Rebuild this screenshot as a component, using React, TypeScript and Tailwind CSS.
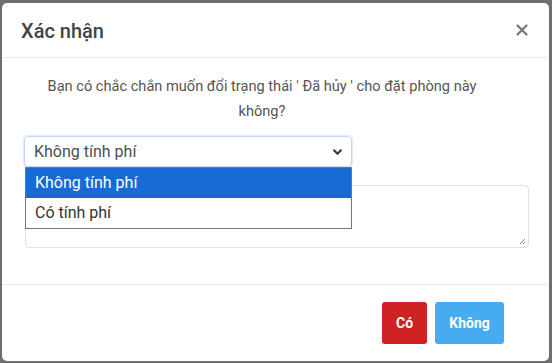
import React from 'react';

const font = { fontFamily: 'Roboto, "Noto Sans", sans-serif' };

const ChevronDown = () => (
  <svg width="11" height="8" viewBox="0 0 11 8" className="text-[#343a40]">
    <path d="M1.5 1.8 L5.5 5.8 L9.5 1.8" fill="none" stroke="currentColor" strokeWidth="2.2" />
  </svg>
);

const CloseIcon = () => (
  <svg width="12" height="12" viewBox="0 0 12 12">
    <path d="M1.5 1.5 L10.5 10.5 M10.5 1.5 L1.5 10.5" stroke="#777" strokeWidth="2.2" strokeLinecap="round" />
  </svg>
);

const options = ['Không tính phí', 'Có tính phí'];

export default function App() {
  return (
    <div className="h-[363px] w-[552px] overflow-hidden bg-[#6f6f6f] pt-[3px] pl-[2px] pr-[3px]" style={font}>
      <div className="h-[358px] rounded-[5px] bg-white flex flex-col">
        {/* header */}
        <div className="h-[55px] flex items-center justify-between pl-[19px] pr-[21px] border-b border-[#e9ecef]">
          <h5 className="text-[20px] font-medium text-[#444] pt-[1px]">Xác nhận</h5>
          <CloseIcon />
        </div>

        {/* body */}
        <div className="h-[227px] px-[22px] pt-[16px] border-b border-[#e9ecef]">
          <p className="text-center text-[14.6px] leading-[25px] text-[#555] ml-[3px] w-[470px]">
            Bạn có chắc chắn muốn đổi trạng thái ' Đã hủy ' cho đặt phòng này không?
          </p>

          <div className="relative mt-[12px]">
            <div className="w-[328px] h-[31px] rounded-[4px] border border-[#c3d6f3] shadow-[0_0_0_1px_#e1ebfa] flex items-center justify-between pl-[9px] pr-[8px]">
              <span className="text-[16px] text-[#495057]">Không tính phí</span>
              <ChevronDown />
            </div>

            <div className="absolute left-[1px] top-[31px] w-[327px] border border-[#767676] bg-white z-10">
              {options.map((o, i) => (
                <div
                  key={o}
                  className={
                    i === 0
                      ? 'h-[30px] flex items-center pl-[9px] text-[16px] bg-[#1a6ad6] text-white'
                      : 'h-[30px] flex items-center pl-[9px] text-[16px] text-[#333]'
                  }
                >
                  {o}
                </div>
              ))}
            </div>

            <div className="mt-[18px] ml-[1px] w-[504px] h-[63px] rounded-[4px] border border-[#dee2e6] relative">
              <svg width="7" height="7" viewBox="0 0 7 7" className="absolute right-[2px] bottom-[2px]">
                <path d="M6 1 L1 6 M6 4 L4 6" stroke="#888" strokeWidth="1" />
              </svg>
            </div>
          </div>
        </div>

        {/* footer */}
        <div className="flex justify-end gap-[8px] pt-[17px] pr-[45px]">
          <button className="h-[42px] w-[45px] rounded-[3px] bg-[#cf2222] text-white text-[14px] font-bold">Có</button>
          <button className="h-[42px] w-[69px] rounded-[3px] bg-[#47abf2] text-white text-[14px] font-bold">Không</button>
        </div>
      </div>
    </div>
  );
}
